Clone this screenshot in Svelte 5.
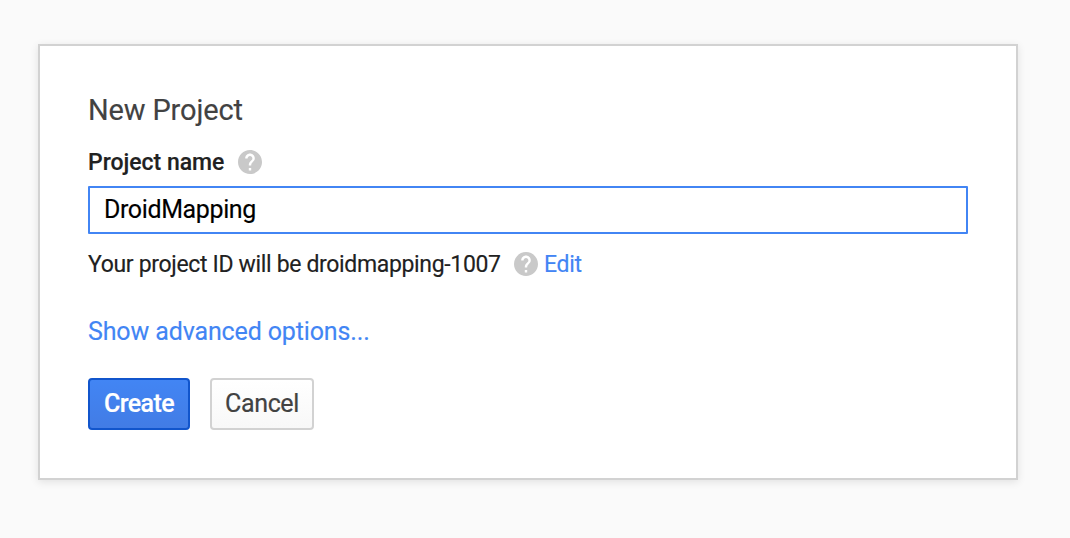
<script>
  let projectName = $state('DroidMapping');
</script>

{#snippet help()}
  <svg class="help" viewBox="2 2 20 20" aria-hidden="true">
    <path fill="#c9c9c9" d="M12 2C6.48 2 2 6.48 2 12s4.48 10 10 10 10-4.48 10-10S17.520 2 12 2zm1 17h-2v-2h2v2zm2.070-7.750l-.9.920C13.450 12.900 13 13.500 13 15h-2v-.5c0-1.100.450-2.100 1.170-2.830l1.240-1.260c.370-.360.590-.860.590-1.410 0-1.100-.9-2-2-2s-2 .9-2 2H8c0-2.210 1.790-4 4-4s4 1.790 4 4c0 .880-.360 1.680-.930 2.250z" />
  </svg>
{/snippet}

<main>
  <section class="card">
    <h1>New Project</h1>
    <div class="label"><label for="name">Project name</label>{@render help()}</div>
    <input id="name" bind:value={projectName} />
    <div class="hint"><span class="idtext">Your project ID will be droidmapping-1007</span>{@render help()}<a href="#edit">Edit</a></div>
    <a class="advanced" href="#advanced">Show advanced options...</a>
    <div class="actions">
      <button class="primary">Create</button>
      <button>Cancel</button>
    </div>
  </section>
</main>

<style>
  :global(body) { background: #fafafa; }
  main { box-sizing: border-box; height: 538px; padding: 44px 52px 0 38px; font-family: Roboto, sans-serif; color: #212121; overflow: hidden; -webkit-text-stroke: .15px currentColor; }
  .card { box-sizing: border-box; width: 980px; height: 436px; padding: 46px 48px; background: #fff; border: 2px solid #d2d2d2; box-shadow: 0 2px 8px rgba(0,0,0,.1); display: flex; flex-direction: column; align-items: flex-start; }
  h1 { margin: 0; font-size: 29px; font-weight: 400; line-height: 36px; color: #424242; white-space: nowrap; letter-spacing: -.15px; }
  .label { display: flex; align-items: center; height: 24px; margin-top: 22px; font-size: 23px; font-weight: 500; }
  .label label { width: 136px; letter-spacing: -.02px; white-space: nowrap; }
  .help { width: 24px; height: 24px; flex: none; }
  .label .help { margin-left: 14px; }
  input { box-sizing: border-box; width: 880px; height: 48px; margin: 12px 0 0; padding: 0 14px 1px; border: 2px solid #4285f4; border-radius: 1px; outline: none; font: 400 25px Roboto, sans-serif; letter-spacing: -.38px; color: #000; background: #fff; -webkit-text-stroke: .15px currentColor; }
  .hint { display: flex; align-items: center; height: 24px; margin-top: 18px; font-size: 23px; letter-spacing: -.34px; white-space: nowrap; }
  .idtext { width: 412px; }
  .hint .help { margin: 0 6px 0 14px; }
  a { color: #4285f4; text-decoration: none; }
  .advanced { margin-top: 41px; font-size: 25px; line-height: 30px; letter-spacing: -.13px; white-space: nowrap; }
  .actions { display: flex; gap: 20px; margin-top: 31px; }
  button { box-sizing: border-box; width: 104px; height: 52px; margin: 0; padding: 0 0 1px; border: 2px solid #d2d2d2; border-radius: 4px; background: linear-gradient(#fff, #f8f8f8); font: 400 25px Roboto, sans-serif; letter-spacing: -.35px; color: #424242; -webkit-text-stroke: .2px currentColor; }
  .primary { width: 102px; border-color: #1155cc; background: linear-gradient(#4285f4, #427ce5); color: #fff; font-weight: 500; letter-spacing: -.6px; }
</style>
